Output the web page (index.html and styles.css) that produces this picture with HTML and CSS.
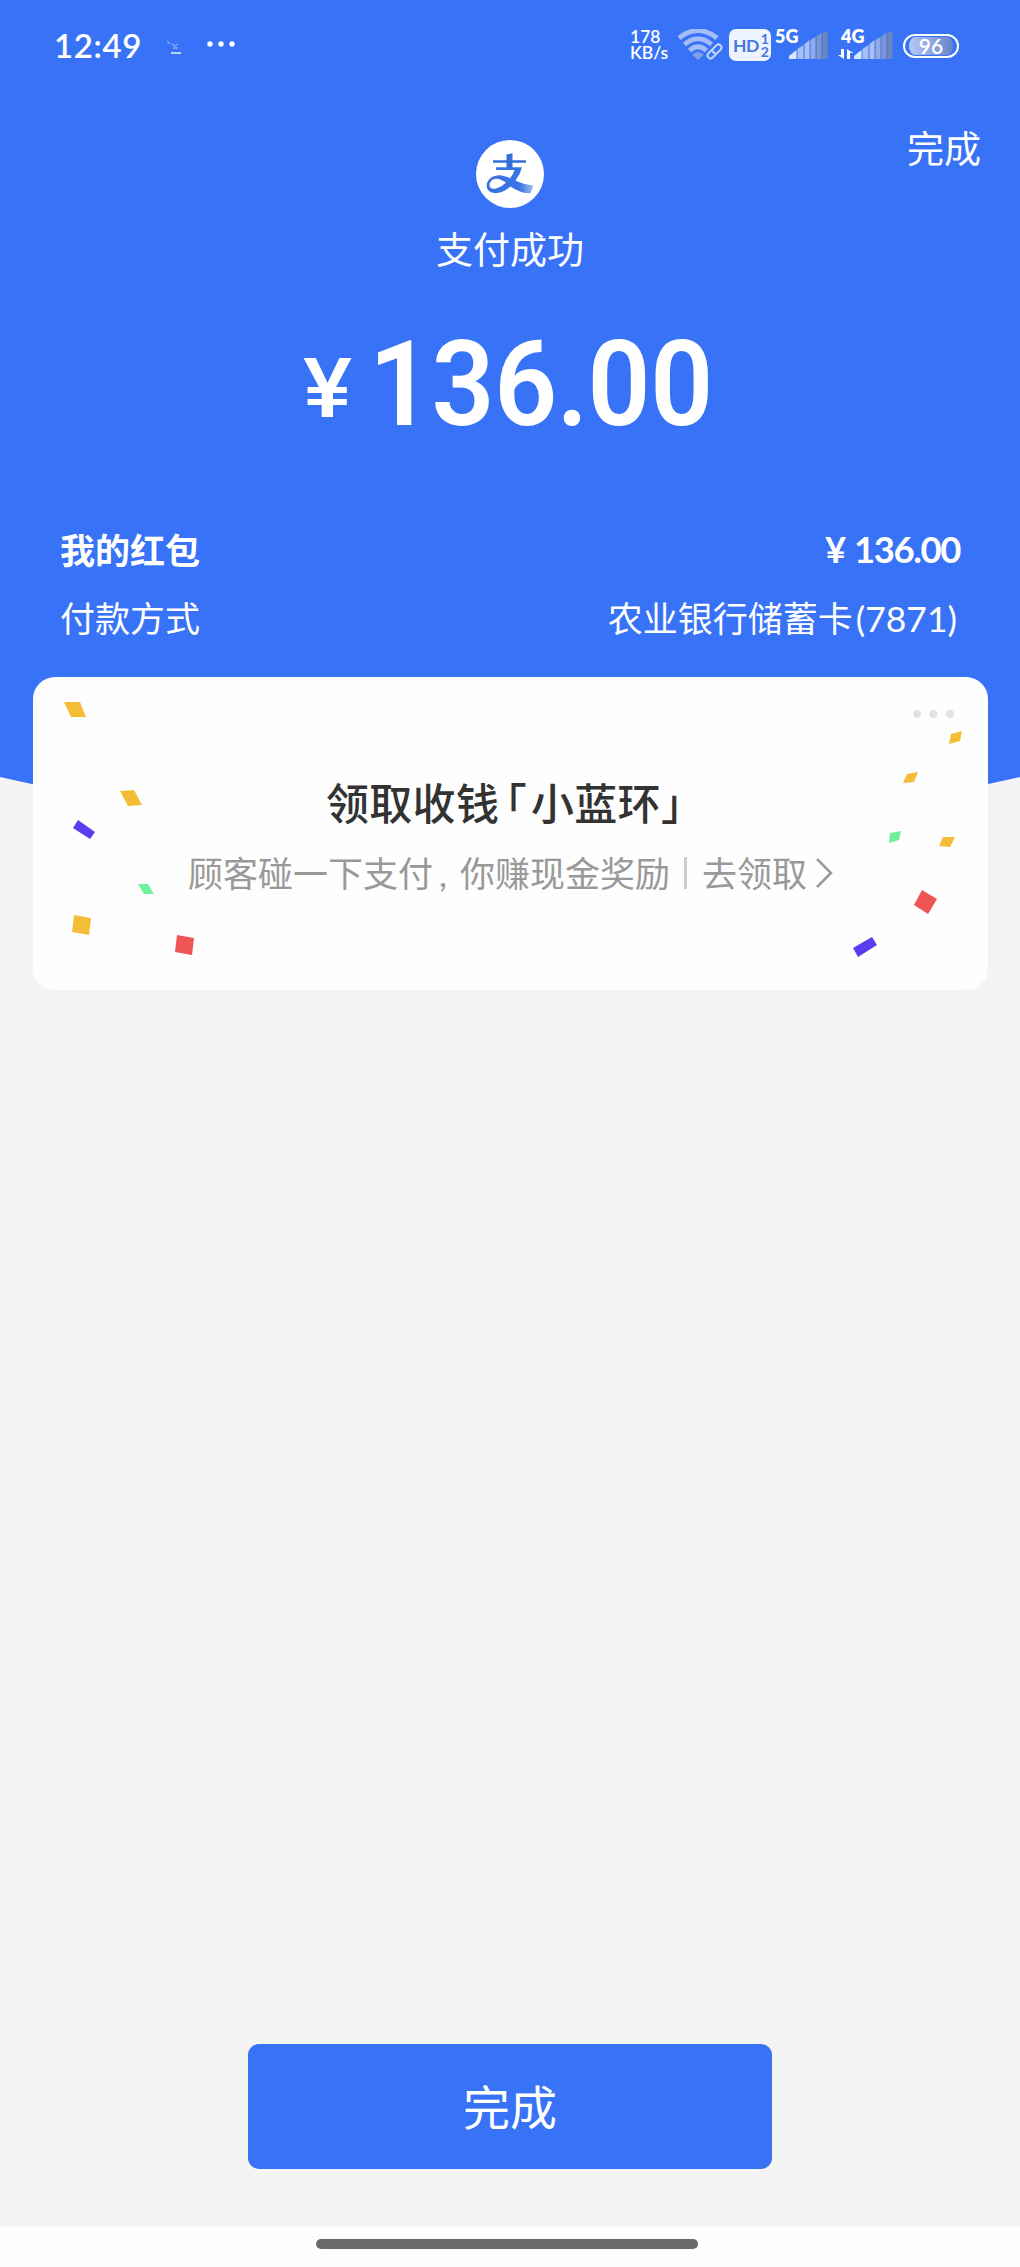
FILE: index.html
```
<!DOCTYPE html>
<html lang="zh-CN">
<head>
<meta charset="utf-8">
<title>支付成功</title>
<link rel="stylesheet" href="styles.css">
</head>
<body>
<div class="page">
  <svg class="backdrop" viewBox="0 0 1020 840" aria-hidden="true"><path d="M0 0H1020V777Q765 837 510 837T0 777Z"/></svg>

  <header class="statusbar">
    <span class="clock">12:49</span>
    <svg class="notice" width="18" height="16" viewBox="0 0 18 16"><path d="M1 1l3 3M6 4l3 2 3-2M7 8h5" stroke="#a9c0f2" stroke-width="1.3" fill="none" opacity=".7"/><path d="M5 13h10" stroke="#b9cdf8" stroke-width="2"/></svg>
    <svg class="more" width="28" height="6" viewBox="0 0 28 6"><circle cx="3" cy="3" r="2.7"/><circle cx="14" cy="3" r="2.7"/><circle cx="25" cy="3" r="2.7"/></svg>
    <div class="speed"><span>178</span><span>KB/s</span></div>
    <svg class="wifi" width="46" height="32" viewBox="0 0 46 32">
      <g fill="none" stroke="#a3bdf8" stroke-width="4.800"><path d="M1 9Q20-6 39 9"/><path d="M6.500 15.500Q20 4 33.500 15.500"/><path d="M11.500 21.500Q20 14 28.500 21.500"/></g>
      <path d="M14 25.500Q20 20.500 26 25.500L20 31Z" fill="#7f9ee6"/>
      <g fill="#3873f7" stroke="#bfd2fc" stroke-width="2"><rect x="-5" y="-3" width="10" height="6" rx="3" transform="translate(34 25) rotate(-45)"/><rect x="-5" y="-3" width="10" height="6" rx="3" transform="translate(39 20) rotate(-45)"/></g>
    </svg>
    <div class="hd"><b>HD</b><span class="sims"><b>1</b><b>2</b></span></div>
    <div class="cell cell-a"><b>5G</b>
      <svg width="40" height="28" viewBox="0 0 40 28"><g fill="#a8c0f3"><path d="M0 28v-3l7.500-6v9Z" fill="#dbe6ff"/><path d="M8.500 28V18l6-4v14Z"/><path d="M15.500 28V13l5-4v19Z"/><path d="M21.500 28V9l5-3v22Z" fill="#91abe5"/><path d="M27.500 28V5l5-3v26Z" fill="#7d95c9"/><path d="M33.500 28V2l5-2v28Z" fill="#6d86bd"/></g></svg>
    </div>
    <div class="cell cell-b"><b>4G</b>
      <svg class="arrows" width="15" height="10" viewBox="0 0 15 10"><path d="M3 0h3v10L0 6h3ZM9 10h3V4h3L9 0Z" fill="#fff"/></svg>
      <svg width="40" height="28" viewBox="0 0 40 28"><g fill="#a8c0f3"><path d="M0 28v-3l7.500-6v9Z" fill="#dbe6ff"/><path d="M8.500 28V18l6-4v14Z"/><path d="M15.500 28V13l5-4v19Z"/><path d="M21.500 28V9l5-3v22Z" fill="#91abe5"/><path d="M27.500 28V5l5-3v26Z" fill="#7d95c9"/><path d="M33.500 28V2l5-2v28Z" fill="#6d86bd"/></g></svg>
    </div>
    <div class="battery"><span>96</span></div>
  </header>

  <nav class="topbar"><a class="done">完成</a></nav>

  <section class="result">
    <svg class="logo" width="68" height="68" viewBox="0 0 68 68">
      <defs><linearGradient id="tail" x1="0" x2="1"><stop offset="0" stop-color="#3973e4"/><stop offset=".7" stop-color="#3973e4"/><stop offset="1" stop-color="#a2bdf4"/></linearGradient></defs>
      <circle cx="34" cy="34" r="34" fill="#fff"/>
      <path d="M17 20.200H50V22.700H17ZM30.500 14.500L36.500 13.200V29H30.500Z" fill="#376fd8"/>
      <path fill-rule="evenodd" d="M20 27.300H46Q44 35 39.500 40.500Q47 44.500 57.500 45.500L54.500 53.200C46 53.500 40 50 34.500 46.500C27 53 19 54.500 14.500 52C8 48.500 10 39 18.500 36C24 34.200 29 36 34 38.200Q37.500 34.500 38.500 30H20ZM30 42.500C26 40 23 38.500 20 38.700C14.500 39 12 45 14.500 47.800C17.500 50.500 25 47.500 30 42.500Z" fill="url(#tail)"/>
    </svg>
    <h1 class="status">支付成功</h1>
    <div class="amount"><span class="yen">¥</span><span class="digits">136.00</span></div>
  </section>

  <dl class="details">
    <div class="row strong"><dt>我的红包</dt><dd class="sum"><span>¥</span><span>136.00</span></dd></div>
    <div class="row"><dt>付款方式</dt><dd class="bank">农业银行储蓄卡<span>(7871)</span></dd></div>
  </dl>

  <section class="promo">
    <svg class="confetti" width="955" height="313" viewBox="1 0 955 313" aria-hidden="true">
      <g fill="#f3bd36"><path d="M32 25h16l6 15H39ZM88 114l14-1 8 15-14 1ZM42 238l17 3-2 17-17-3ZM919 57l11-3-2 10-11 3ZM875 97l11-2-4 10-11 1ZM911 160l12 0-5 10-11-1Z"/></g>
      <g fill="#6ff09b"><path d="M106 207h10l6 10h-10ZM858 156l11-2-2 9-10 3Z"/></g>
      <g fill="#5c3cf0"><path d="M46 143l17 12-5 7-17-11ZM821 271l19-11 5 8-19 12Z"/></g>
      <g fill="#ee5553"><path d="M145 258l17 3-2 17-17-3ZM890 213l15 9-9 15-14-9Z"/></g>
    </svg>
    <svg class="menu" width="42" height="10" viewBox="0 0 42 10"><circle cx="5" cy="5" r="4"/><circle cx="21.500" cy="5" r="4"/><circle cx="38" cy="5" r="4"/></svg>
    <h2 class="promo-title">领取收钱<span class="open">「</span>小蓝环<span class="close">」</span></h2>
    <p class="promo-sub"><span>顾客碰一下支付<i class="comma">,</i>你赚现金奖励</span><span class="divider"></span><span>去领取</span><svg class="chevron" width="18" height="32" viewBox="0 0 18 32"><path d="M2 2L16 16L2 30"/></svg></p>
  </section>

  <button class="primary">完成</button>
  <footer class="homebar"><span></span></footer>
</div>
</body>
</html>
```
FILE: styles.css
```
* { box-sizing: border-box; margin: 0; padding: 0; }
body { background: #f4f4f4; font-family: Lato, "Noto Sans CJK SC", sans-serif; }
.page { position: relative; width: 1020px; height: 2267px; display: flex; flex-direction: column; background: #f4f4f4; color: #fff; overflow: hidden; }
.backdrop { position: absolute; left: 0; top: 0; width: 1020px; height: 840px; fill: #3873f7; }
.page > :not(.backdrop) { z-index: 1; }

.statusbar { display: flex; align-items: flex-start; height: 90px; padding-left: 54px; flex: none; }
.clock { width: 112px; margin-top: 25px; font: 600 33px/40px Lato, sans-serif; letter-spacing: .6px; white-space: nowrap; }
.notice { margin-top: 40px; }
.more { margin: 41px 0 0 23px; fill: #fff; }
.speed { display: flex; flex-direction: column; width: 46px; margin: 29px 0 0 395px; font: 600 17.500px/16px Lato, sans-serif; }
.wifi { margin: 29px 0 0 2px; flex: none; }
.hd { display: flex; align-items: center; width: 42px; height: 32px; margin: 29px 0 0 5px; padding-left: 4px; border-radius: 7px; background: #edf3ff; color: #4776dc; font: 17.500px/31px Lato, sans-serif; letter-spacing: -.5px; }
.sims { display: flex; flex-direction: column; margin-left: 2px; font-size: 14px; line-height: 13px; }
.cell { position: relative; width: 54px; height: 32px; margin: 29px 0 0 4px; }
.cell-b { width: 56px; margin-left: 9px; }
.cell b { position: absolute; left: 0; top: 0; z-index: 1; font: 800 18px/15px Lato, sans-serif; }
.cell svg { position: absolute; right: 0; bottom: 2px; }
.cell-b b { left: 3px; }
.cell .arrows { left: 0; right: auto; }
.battery { width: 56px; height: 24px; margin: 34px 0 0 9px; border: 2.500px solid #fff; border-radius: 12px; background: linear-gradient(90deg, #b6c9f7, #6684c8) content-box; padding: 1px 4px; font: 600 21px/17px Lato, sans-serif; text-align: center; }

.topbar { display: flex; justify-content: flex-end; height: 50px; padding: 32px 39px 0 0; flex: none; }
.done { font-size: 37px; line-height: 54px; height: 54px; }

.result { display: flex; flex-direction: column; align-items: center; height: 380px; flex: none; }
.logo { flex: none; margin-right: 1px; }
.status { margin-top: 15px; font-size: 37px; line-height: 54px; font-weight: 400; }
.amount { display: flex; align-items: flex-start; align-self: flex-start; margin-top: 43px; padding-left: 303px; height: 130px; font-family: Roboto, sans-serif; font-weight: 600; line-height: 130px; }
.yen { width: 66px; font-size: 84px; font-weight: 500; line-height: 138px; transform: scaleX(1.1); transform-origin: left; }
.digits { font-size: 118px; letter-spacing: -.5px; transform: scaleX(.935); transform-origin: left; }

.details { display: flex; flex-direction: column; padding: 0 60px; height: 157px; flex: none; }
.row { display: flex; justify-content: space-between; height: 67px; font-size: 35px; line-height: 62px; }
.strong { font-weight: 700; line-height: 61px; }
.sum { display: flex; gap: 9px; font-size: 36.500px; letter-spacing: -1.400px; line-height: 59px; }
.bank { margin-right: 3px; }
.bank span { margin-left: 3px; font-size: 35.500px; }

.promo { position: relative; display: flex; flex-direction: column; width: 955px; height: 313px; margin-left: 33px; border-radius: 22px; background: #fefefe; color: #333; flex: none; }
.confetti { position: absolute; inset: 0; }
.menu { position: absolute; right: 34px; top: 32px; fill: #e2e2e2; }
.promo-title { margin: 96px 0 0 293px; font-size: 43px; line-height: 62px; font-weight: 500; letter-spacing: .3px; white-space: nowrap; }
.open, .close { font-feature-settings: "halt"; }
.open { margin: 0 4px 0 6px; }
.promo-sub { display: flex; align-items: center; margin: 12px 0 0 155px; font-size: 35px; line-height: 52px; color: #999; white-space: nowrap; }
.comma { display: inline-block; width: 27px; padding-left: 6px; font-style: normal; }
.divider { width: 3px; height: 32px; margin: 0 15px 0 14px; background: #ccc; }
.chevron { margin-left: 8px; fill: none; stroke: #999; stroke-width: 2.500; }

.primary { width: 524px; height: 125px; margin: 1054px auto 58px 248px; padding-bottom: 4px; border: 0; border-radius: 11px; background: #3873f7; color: #fff; font: 400 47px/121px "Noto Sans CJK SC", sans-serif; flex: none; }
.homebar { display: flex; justify-content: center; height: 40px; padding: 12px 6px 0 0; background: #fefefe; flex: none; }
.homebar span { width: 382px; height: 10px; border-radius: 5px; background: #6a6a6a; }
```
